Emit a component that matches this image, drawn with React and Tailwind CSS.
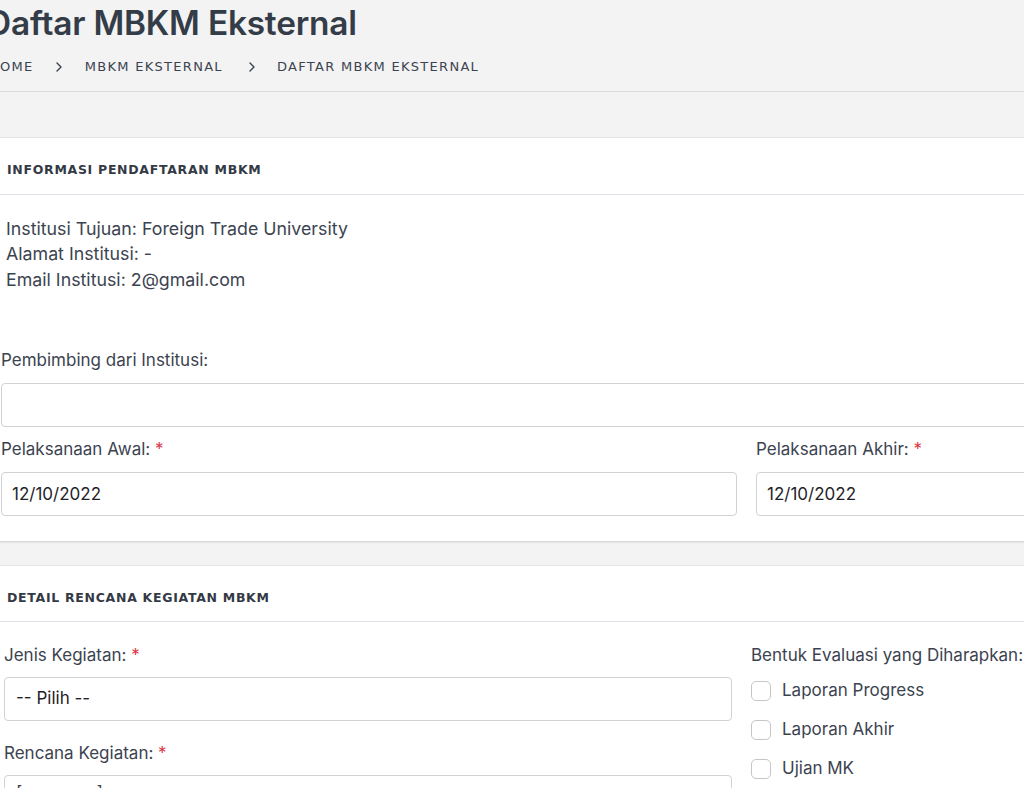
import React from "react";

const inter = { fontFamily: "Inter, 'Noto Sans', sans-serif" };

function Req() {
  return <span className="text-[#dc3545]"> *</span>;
}

function Chevron({ className = "" }) {
  return (
    <svg width="6" height="10" viewBox="0 0 6 10" className={"shrink-0 " + className} fill="none">
      <path d="M1 1l4 4-4 4" stroke="#3b4350" strokeWidth="1.4" strokeLinecap="round" strokeLinejoin="round" />
    </svg>
  );
}

function Field({ value, className = "" }) {
  return (
    <div className={"h-[44px] rounded-[4px] border border-[#d2d2d2] bg-white flex items-center text-[17px] text-[#1f2329] " + className}>
      {value}
    </div>
  );
}

function Checkbox({ label }) {
  return (
    <div className="h-[39px] flex items-center gap-[11px]">
      <div className="w-[20px] h-[20px] rounded-[5px] border border-[#c6c6c6] bg-white shrink-0" />
      <span className="text-[17px] text-[#3c4350]">{label}</span>
    </div>
  );
}

export default function App() {
  return (
    <div className="w-[1024px] h-[788px] overflow-hidden bg-[#f3f3f3]" style={inter}>
      <div className="-ml-[24px] w-[1560px]">
        {/* Page header */}
        <div className="border-b border-[#dcdcdc] pb-[14px]">
          <h1 className="pl-[11px] pt-[2px] text-[33.4px] leading-[43px] font-semibold text-[#343c48] tracking-[-0.2px]">
            Daftar MBKM Eksternal
          </h1>
          <div
            className="mt-[12px] pl-[13px] flex items-center text-[13px] leading-[20px] tracking-[1.3px] text-[#3b4350]"
            style={{ fontFamily: "'DejaVu Sans', sans-serif" }}
          >
            <span>HOME</span>
            <Chevron className="ml-[22px] mr-[23px]" />
            <span>MBKM EKSTERNAL</span>
            <Chevron className="ml-[26px] mr-[22px]" />
            <span>DAFTAR MBKM EKSTERNAL</span>
          </div>
        </div>

        {/* Card 1 */}
        <div className="mt-[45px] bg-white border-t border-[#e4e4e4] border-b border-b-[#d9d9d9] shadow-[0_1px_2px_rgba(0,0,0,0.06)]">
          <div
            className="pl-[31px] pt-[24px] pb-[16px] border-b border-[#dedfe6] text-[12.5px] leading-[16px] font-bold tracking-[0.7px] text-[#343a45]"
            style={{ fontFamily: "'DejaVu Sans', sans-serif" }}
          >
            INFORMASI PENDAFTARAN MBKM
          </div>
          <div className="pl-[25px] pt-[20px] pb-[25px] text-[17px] leading-[25.5px] text-[#3c4350]">
            <div className="pl-[5px] pt-[0.5px] text-[17.8px]">
              <div>Institusi Tujuan: Foreign Trade University</div>
              <div>Alamat Institusi: -</div>
              <div>Email Institusi: 2@gmail.com</div>
            </div>
            <div className="mt-[56px] w-[1491px]">
              <div className="mb-[9.5px]">Pembimbing dari Institusi:</div>
              <Field value="" className="px-[10px]" />
            </div>
            <div className="mt-[10px] grid grid-cols-[736px_736px] gap-x-[19px]">
              <div>
                <div className="mb-[9.5px]">
                  Pelaksanaan Awal:<Req />
                </div>
                <Field value="12/10/2022" className="px-[10px] pt-[1px]" />
              </div>
              <div>
                <div className="mb-[9.5px]">
                  Pelaksanaan Akhir:<Req />
                </div>
                <Field value="12/10/2022" className="px-[10px] pt-[1px]" />
              </div>
            </div>
          </div>
        </div>

        {/* Card 2 */}
        <div className="mt-[23px] bg-white border-t border-[#e4e4e4]">
          <div
            className="pl-[31px] pt-[24px] pb-[15px] border-b border-[#dedfe6] text-[12.5px] leading-[16px] font-bold tracking-[0.7px] text-[#343a45]"
            style={{ fontFamily: "'DejaVu Sans', sans-serif" }}
          >
            DETAIL RENCANA KEGIATAN MBKM
          </div>
          <div className="pl-[28px] pt-[21px] pb-[25px] text-[17px] leading-[25.5px] text-[#3c4350] grid grid-cols-[728px_728px] gap-x-[19px]">
            <div>
              <div className="mb-[8.5px]">
                Jenis Kegiatan:<Req />
              </div>
              <Field value="-- Pilih --" className="px-[11px] h-[43px]" />
              <div className="mt-[20px] mb-[8.5px]">
                Rencana Kegiatan:<Req />
              </div>
              <div className="h-[120px] rounded-[4px] border border-[#d2d2d2] bg-white px-[11px] pt-[4px] text-[17px] text-[#3c4350]">
                [ rencana ]
              </div>
            </div>
            <div>
              <div>Bentuk Evaluasi yang Diharapkan:</div>
              <div className="mt-[2.5px]">
                <Checkbox label="Laporan Progress" />
                <Checkbox label="Laporan Akhir" />
                <Checkbox label="Ujian MK" />
              </div>
            </div>
          </div>
        </div>
      </div>
    </div>
  );
}
